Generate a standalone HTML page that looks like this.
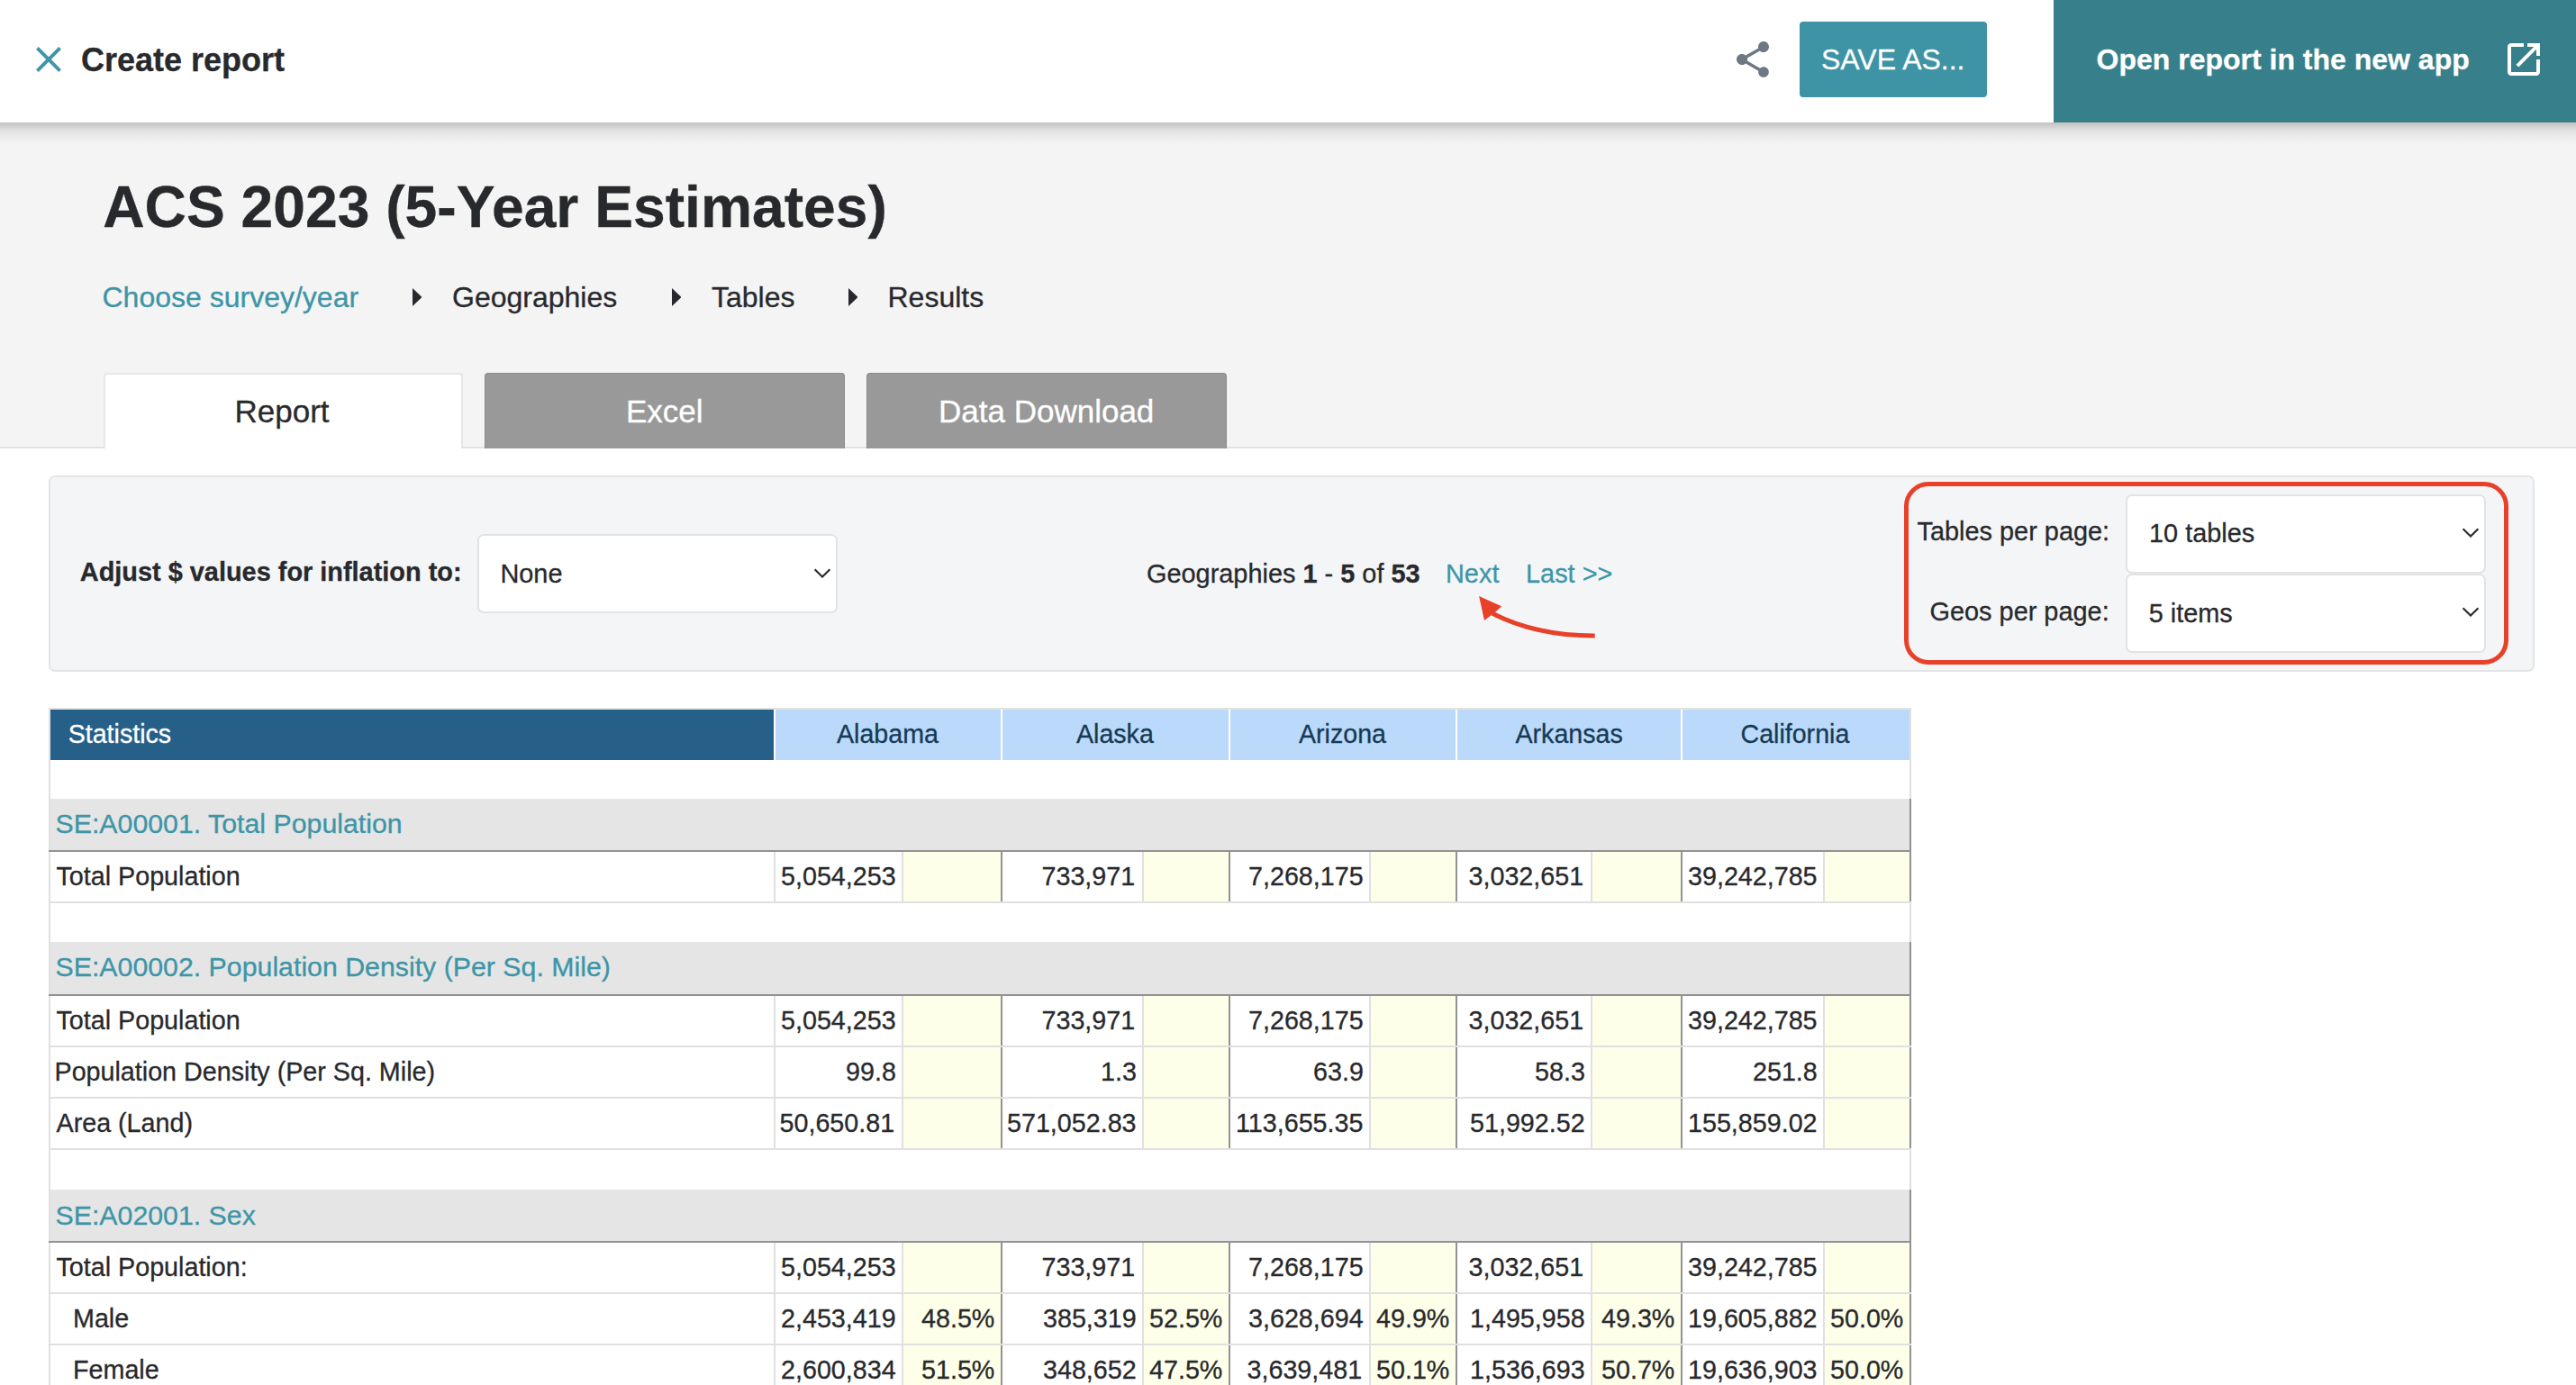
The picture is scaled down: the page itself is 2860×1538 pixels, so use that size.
<!DOCTYPE html>
<html><head><meta charset="utf-8"><title>Create report</title><style>*{margin:0;padding:0}
html,body{width:2860px;height:1538px;overflow:hidden;background:#fff}
body{position:relative;font-family:"Liberation Sans",sans-serif}
body>div{-webkit-text-stroke:0.3px currentColor}
body>div,body>svg{position:absolute}
</style></head>
<body>
<div style="left:0;top:0;width:2860px;height:497px;background:#f4f4f4"></div>
<div style="left:0;top:496px;width:2860px;height:2px;background:#e2e2e2"></div>
<div style="left:0px;top:136px;width:2860px;height:24px;background:linear-gradient(rgba(0,0,0,0.20),rgba(0,0,0,0.06) 45%,rgba(0,0,0,0));"></div>
<div style="left:0px;top:0px;width:2860px;height:136px;background:#fff;"></div>
<svg style="left:30px;top:42px" width="48" height="48" viewBox="0 0 24 24"><path fill="#3e96a8" d="M19 6.41L17.59 5 12 10.59 6.41 5 5 6.41 10.59 12 5 17.59 6.41 19 12 13.41 17.59 19 19 17.59 13.41 12z"/></svg>
<div style="left:90.00px;top:36.52px;font-size:36px;line-height:60px;font-weight:bold;color:#28292c;white-space:nowrap;">Create report</div>
<svg style="left:1922px;top:42px" width="48" height="48" viewBox="0 0 24 24"><path fill="#6e7885" d="M18 16.08c-.76 0-1.44.3-1.96.77L8.91 12.7c.05-.23.09-.46.09-.7s-.04-.47-.09-.7l7.05-4.11c.54.5 1.25.81 2.04.81 1.66 0 3-1.34 3-3s-1.34-3-3-3-3 1.34-3 3c0 .24.04.47.09.7L8.04 9.81C7.5 9.31 6.79 9 6 9c-1.66 0-3 1.34-3 3s1.34 3 3 3c.79 0 1.5-.31 2.04-.81l7.12 4.16c-.05.21-.08.43-.08.65 0 1.61 1.31 2.92 2.92 2.92 1.61 0 2.92-1.31 2.92-2.92s-1.31-2.92-2.92-2.92z"/></svg>
<div style="left:1998px;top:24px;width:208px;height:84px;background:#3e93a5;border-radius:4px;"></div>
<div style="left:2022.00px;top:35.91px;font-size:32px;line-height:60px;color:#fff;white-space:nowrap;">SAVE AS...</div>
<div style="left:2280px;top:0px;width:580px;height:136px;background:#37808b;"></div>
<div style="left:2327.50px;top:35.91px;font-size:32px;line-height:60px;font-weight:bold;color:#fff;white-space:nowrap;">Open report in the new app</div>
<svg style="left:2778px;top:41.5px" width="48" height="48" viewBox="0 0 24 24"><path fill="#fff" d="M19 19H5V5h7V3H5c-1.11 0-2 .9-2 2v14c0 1.1.89 2 2 2h14c1.1 0 2-.9 2-2v-7h-2v7zM14 3v2h3.59l-9.83 9.83 1.41 1.41L19 6.41V10h2V3h-7z"/></svg>
<div style="left:114.25px;top:200.49px;font-size:64.2px;line-height:60px;font-weight:bold;color:#28292c;white-space:nowrap;">ACS 2023 (5-Year Estimates)</div>
<div style="left:113.50px;top:300.41px;font-size:32px;line-height:60px;color:#3d95a7;white-space:nowrap;">Choose survey/year</div>
<svg style="left:458px;top:320px" width="10.4" height="20" viewBox="0 0 10.4 20"><path d="M0 0 L10.4 10 L0 20 Z" fill="#28292c"/></svg>
<svg style="left:745.8px;top:320px" width="10.4" height="20" viewBox="0 0 10.4 20"><path d="M0 0 L10.4 10 L0 20 Z" fill="#28292c"/></svg>
<svg style="left:942px;top:320px" width="10.4" height="20" viewBox="0 0 10.4 20"><path d="M0 0 L10.4 10 L0 20 Z" fill="#28292c"/></svg>
<div style="left:502.00px;top:300.41px;font-size:32px;line-height:60px;color:#28292c;white-space:nowrap;">Geographies</div>
<div style="left:790.00px;top:300.41px;font-size:32px;line-height:60px;color:#28292c;white-space:nowrap;">Tables</div>
<div style="left:985.50px;top:300.41px;font-size:32px;line-height:60px;color:#28292c;white-space:nowrap;">Results</div>
<div style="left:115px;top:414px;width:399px;height:84px;background:#fff;border:2px solid #e6e6e6;border-bottom:none;border-radius:4px 4px 0 0;box-sizing:border-box;"></div>
<div style="left:260.50px;top:427.37px;font-size:35px;line-height:60px;color:#2a2a2a;white-space:nowrap;">Report</div>
<div style="left:538px;top:414px;width:400px;height:84px;background:#999;border:1.5px solid #8a8a8a;border-bottom:none;box-sizing:border-box;border-radius:4px 4px 0 0;"></div>
<div style="left:695.00px;top:427.37px;font-size:35px;line-height:60px;color:#fff;white-space:nowrap;">Excel</div>
<div style="left:962px;top:414px;width:400px;height:84px;background:#999;border:1.5px solid #8a8a8a;border-bottom:none;box-sizing:border-box;border-radius:4px 4px 0 0;"></div>
<div style="left:1042.00px;top:427.37px;font-size:35px;line-height:60px;color:#fff;white-space:nowrap;">Data Download</div>
<div style="left:54px;top:528px;width:2760px;height:218px;background:#f4f5f7;border:2px solid #e3e4e6;border-radius:7px;box-sizing:border-box;"></div>
<div style="left:88.80px;top:604.78px;font-size:28.9px;line-height:60px;font-weight:bold;color:#28292c;white-space:nowrap;">Adjust $ values for inflation to:</div>
<div style="left:530px;top:593px;width:400px;height:88px;background:#fff;border:2px solid #e3e3e3;border-radius:7px;box-sizing:border-box;"></div>
<div style="left:555.40px;top:607.48px;font-size:28.9px;line-height:60px;color:#28292c;white-space:nowrap;">None</div>
<svg style="left:902px;top:628.5px" width="24" height="16" viewBox="0 0 24 16"><path d="M2.6 3.2 L11 11.6 L19.4 3.2" stroke="#28292c" stroke-width="2.1" fill="none"/></svg>
<div style="left:1273.00px;top:606.98px;font-size:28.9px;line-height:60px;color:#28292c;white-space:nowrap;">Geographies <b>1</b> - <b>5</b> of <b>53</b></div>
<div style="left:1605.00px;top:606.98px;font-size:28.9px;line-height:60px;color:#3d95a7;white-space:nowrap;">Next</div>
<div style="left:1694.00px;top:606.98px;font-size:28.9px;line-height:60px;color:#3d95a7;white-space:nowrap;">Last >></div>
<svg style="left:1630px;top:650px" width="150" height="70" viewBox="0 0 150 70"><path d="M140.7 55.9 C100 56 60 48 27 31.2" stroke="#e8412a" stroke-width="5" fill="none"/><path d="M12.1 12.1 L37.1 23.3 L29.8 30.1 L25.5 33.2 L18 39.1 Z" fill="#e8412a"/></svg>
<div style="left:2114px;top:535px;width:671px;height:203px;border:5px solid #e8412a;border-radius:27px;box-sizing:border-box;"></div>
<div style="left:2360px;top:548.5px;width:400px;height:88.5px;background:#fff;border:2px solid #e3e3e3;border-radius:7px;box-sizing:border-box;"></div>
<div style="left:2386.00px;top:561.98px;font-size:28.9px;line-height:60px;color:#28292c;white-space:nowrap;">10 tables</div>
<svg style="left:2732px;top:584.25px" width="24" height="16" viewBox="0 0 24 16"><path d="M2.6 3.2 L11 11.6 L19.4 3.2" stroke="#28292c" stroke-width="2.1" fill="none"/></svg>
<div style="left:2360px;top:637px;width:400px;height:87.70000000000005px;background:#fff;border:2px solid #e3e3e3;border-radius:7px;box-sizing:border-box;"></div>
<div style="left:2385.70px;top:651.18px;font-size:28.9px;line-height:60px;color:#28292c;white-space:nowrap;">5 items</div>
<svg style="left:2732px;top:672.35px" width="24" height="16" viewBox="0 0 24 16"><path d="M2.6 3.2 L11 11.6 L19.4 3.2" stroke="#28292c" stroke-width="2.1" fill="none"/></svg>
<div style="left:2128.50px;top:560.18px;font-size:28.9px;line-height:60px;color:#28292c;white-space:nowrap;">Tables per page:</div>
<div style="left:2142.50px;top:648.98px;font-size:28.9px;line-height:60px;color:#28292c;white-space:nowrap;">Geos per page:</div>
<div style="left:54px;top:786px;width:2068px;height:2px;background:#e2e2e2;"></div>
<div style="left:56px;top:788px;width:803px;height:56px;background:#266089;"></div>
<div style="left:75.70px;top:784.58px;font-size:28.6px;line-height:60px;color:#fff;white-space:nowrap;">Statistics</div>
<div style="left:861px;top:788px;width:250px;height:56px;background:#bbdafb;"></div>
<div style="left:929.00px;top:784.58px;font-size:28.6px;line-height:60px;color:#163a55;white-space:nowrap;">Alabama</div>
<div style="left:1113px;top:788px;width:251px;height:56px;background:#bbdafb;"></div>
<div style="left:1195.00px;top:784.58px;font-size:28.6px;line-height:60px;color:#163a55;white-space:nowrap;">Alaska</div>
<div style="left:1366px;top:788px;width:250px;height:56px;background:#bbdafb;"></div>
<div style="left:1442.00px;top:784.58px;font-size:28.6px;line-height:60px;color:#163a55;white-space:nowrap;">Arizona</div>
<div style="left:1618px;top:788px;width:248px;height:56px;background:#bbdafb;"></div>
<div style="left:1682.50px;top:784.58px;font-size:28.6px;line-height:60px;color:#163a55;white-space:nowrap;">Arkansas</div>
<div style="left:1868px;top:788px;width:252px;height:56px;background:#bbdafb;"></div>
<div style="left:1932.50px;top:784.58px;font-size:28.6px;line-height:60px;color:#163a55;white-space:nowrap;">California</div>
<div style="left:54px;top:788px;width:2px;height:750px;background:#e0e0e0;"></div>
<div style="left:2120px;top:788px;width:2px;height:750px;background:#e0e0e0;"></div>
<div style="left:56px;top:887px;width:2064px;height:57.299999999999955px;background:#e5e5e5;"></div>
<div style="left:54px;top:944.3px;width:2068px;height:2.0px;background:#929292;"></div>
<div style="left:2120px;top:887px;width:2px;height:57.299999999999955px;background:#929292;"></div>
<div style="left:61.50px;top:885.49px;font-size:30.3px;line-height:60px;color:#3d95a7;white-space:nowrap;">SE:A00001. Total Population</div>
<div style="left:56px;top:946.3px;width:2064px;height:55.0px;background:#fff;"></div>
<div style="left:1003px;top:946.3px;width:108px;height:55.0px;background:#fdffe8;"></div>
<div style="left:1001px;top:946.3px;width:2px;height:55.0px;background:#e0e0e0;"></div>
<div style="left:1111px;top:946.3px;width:2px;height:55.0px;background:#929292;"></div>
<div style="left:867.00px;top:942.95px;font-size:28.7px;line-height:60px;color:#28292c;white-space:nowrap;">5,054,253</div>
<div style="left:1270px;top:946.3px;width:94px;height:55.0px;background:#fdffe8;"></div>
<div style="left:1268px;top:946.3px;width:2px;height:55.0px;background:#e0e0e0;"></div>
<div style="left:1364px;top:946.3px;width:2px;height:55.0px;background:#929292;"></div>
<div style="left:1156.50px;top:942.95px;font-size:28.7px;line-height:60px;color:#28292c;white-space:nowrap;">733,971</div>
<div style="left:1522px;top:946.3px;width:94px;height:55.0px;background:#fdffe8;"></div>
<div style="left:1520px;top:946.3px;width:2px;height:55.0px;background:#e0e0e0;"></div>
<div style="left:1616px;top:946.3px;width:2px;height:55.0px;background:#929292;"></div>
<div style="left:1386.00px;top:942.95px;font-size:28.7px;line-height:60px;color:#28292c;white-space:nowrap;">7,268,175</div>
<div style="left:1768px;top:946.3px;width:98px;height:55.0px;background:#fdffe8;"></div>
<div style="left:1766px;top:946.3px;width:2px;height:55.0px;background:#e0e0e0;"></div>
<div style="left:1866px;top:946.3px;width:2px;height:55.0px;background:#929292;"></div>
<div style="left:1630.50px;top:942.95px;font-size:28.7px;line-height:60px;color:#28292c;white-space:nowrap;">3,032,651</div>
<div style="left:2026px;top:946.3px;width:94px;height:55.0px;background:#fdffe8;"></div>
<div style="left:2024px;top:946.3px;width:2px;height:55.0px;background:#e0e0e0;"></div>
<div style="left:2120px;top:946.3px;width:2px;height:55.0px;background:#929292;"></div>
<div style="left:1874.00px;top:942.95px;font-size:28.7px;line-height:60px;color:#28292c;white-space:nowrap;">39,242,785</div>
<div style="left:859px;top:946.3px;width:2px;height:55.0px;background:#e0e0e0;"></div>
<div style="left:62.50px;top:942.95px;font-size:28.7px;line-height:60px;color:#28292c;white-space:nowrap;">Total Population</div>
<div style="left:56px;top:1001.3px;width:2066px;height:2.0px;background:#e0e0e0;"></div>
<div style="left:56px;top:1046px;width:2064px;height:58.200000000000045px;background:#e5e5e5;"></div>
<div style="left:54px;top:1104.2px;width:2068px;height:2.0px;background:#929292;"></div>
<div style="left:2120px;top:1046px;width:2px;height:58.200000000000045px;background:#929292;"></div>
<div style="left:61.50px;top:1044.49px;font-size:30.3px;line-height:60px;color:#3d95a7;white-space:nowrap;">SE:A00002. Population Density (Per Sq. Mile)</div>
<div style="left:56px;top:1106.2px;width:2064px;height:55.0px;background:#fff;"></div>
<div style="left:1003px;top:1106.2px;width:108px;height:55.0px;background:#fdffe8;"></div>
<div style="left:1001px;top:1106.2px;width:2px;height:55.0px;background:#e0e0e0;"></div>
<div style="left:1111px;top:1106.2px;width:2px;height:55.0px;background:#929292;"></div>
<div style="left:867.00px;top:1102.85px;font-size:28.7px;line-height:60px;color:#28292c;white-space:nowrap;">5,054,253</div>
<div style="left:1270px;top:1106.2px;width:94px;height:55.0px;background:#fdffe8;"></div>
<div style="left:1268px;top:1106.2px;width:2px;height:55.0px;background:#e0e0e0;"></div>
<div style="left:1364px;top:1106.2px;width:2px;height:55.0px;background:#929292;"></div>
<div style="left:1156.50px;top:1102.85px;font-size:28.7px;line-height:60px;color:#28292c;white-space:nowrap;">733,971</div>
<div style="left:1522px;top:1106.2px;width:94px;height:55.0px;background:#fdffe8;"></div>
<div style="left:1520px;top:1106.2px;width:2px;height:55.0px;background:#e0e0e0;"></div>
<div style="left:1616px;top:1106.2px;width:2px;height:55.0px;background:#929292;"></div>
<div style="left:1386.00px;top:1102.85px;font-size:28.7px;line-height:60px;color:#28292c;white-space:nowrap;">7,268,175</div>
<div style="left:1768px;top:1106.2px;width:98px;height:55.0px;background:#fdffe8;"></div>
<div style="left:1766px;top:1106.2px;width:2px;height:55.0px;background:#e0e0e0;"></div>
<div style="left:1866px;top:1106.2px;width:2px;height:55.0px;background:#929292;"></div>
<div style="left:1630.50px;top:1102.85px;font-size:28.7px;line-height:60px;color:#28292c;white-space:nowrap;">3,032,651</div>
<div style="left:2026px;top:1106.2px;width:94px;height:55.0px;background:#fdffe8;"></div>
<div style="left:2024px;top:1106.2px;width:2px;height:55.0px;background:#e0e0e0;"></div>
<div style="left:2120px;top:1106.2px;width:2px;height:55.0px;background:#929292;"></div>
<div style="left:1874.00px;top:1102.85px;font-size:28.7px;line-height:60px;color:#28292c;white-space:nowrap;">39,242,785</div>
<div style="left:859px;top:1106.2px;width:2px;height:55.0px;background:#e0e0e0;"></div>
<div style="left:62.50px;top:1102.85px;font-size:28.7px;line-height:60px;color:#28292c;white-space:nowrap;">Total Population</div>
<div style="left:56px;top:1161.2px;width:2066px;height:2.0px;background:#e0e0e0;"></div>
<div style="left:56px;top:1163.2px;width:2064px;height:55.0px;background:#fff;"></div>
<div style="left:1003px;top:1163.2px;width:108px;height:55.0px;background:#fdffe8;"></div>
<div style="left:1001px;top:1163.2px;width:2px;height:55.0px;background:#e0e0e0;"></div>
<div style="left:1111px;top:1163.2px;width:2px;height:55.0px;background:#929292;"></div>
<div style="left:939.00px;top:1159.85px;font-size:28.7px;line-height:60px;color:#28292c;white-space:nowrap;">99.8</div>
<div style="left:1270px;top:1163.2px;width:94px;height:55.0px;background:#fdffe8;"></div>
<div style="left:1268px;top:1163.2px;width:2px;height:55.0px;background:#e0e0e0;"></div>
<div style="left:1364px;top:1163.2px;width:2px;height:55.0px;background:#929292;"></div>
<div style="left:1222.00px;top:1159.85px;font-size:28.7px;line-height:60px;color:#28292c;white-space:nowrap;">1.3</div>
<div style="left:1522px;top:1163.2px;width:94px;height:55.0px;background:#fdffe8;"></div>
<div style="left:1520px;top:1163.2px;width:2px;height:55.0px;background:#e0e0e0;"></div>
<div style="left:1616px;top:1163.2px;width:2px;height:55.0px;background:#929292;"></div>
<div style="left:1458.00px;top:1159.85px;font-size:28.7px;line-height:60px;color:#28292c;white-space:nowrap;">63.9</div>
<div style="left:1768px;top:1163.2px;width:98px;height:55.0px;background:#fdffe8;"></div>
<div style="left:1766px;top:1163.2px;width:2px;height:55.0px;background:#e0e0e0;"></div>
<div style="left:1866px;top:1163.2px;width:2px;height:55.0px;background:#929292;"></div>
<div style="left:1704.00px;top:1159.85px;font-size:28.7px;line-height:60px;color:#28292c;white-space:nowrap;">58.3</div>
<div style="left:2026px;top:1163.2px;width:94px;height:55.0px;background:#fdffe8;"></div>
<div style="left:2024px;top:1163.2px;width:2px;height:55.0px;background:#e0e0e0;"></div>
<div style="left:2120px;top:1163.2px;width:2px;height:55.0px;background:#929292;"></div>
<div style="left:1946.00px;top:1159.85px;font-size:28.7px;line-height:60px;color:#28292c;white-space:nowrap;">251.8</div>
<div style="left:859px;top:1163.2px;width:2px;height:55.0px;background:#e0e0e0;"></div>
<div style="left:60.50px;top:1159.85px;font-size:28.7px;line-height:60px;color:#28292c;white-space:nowrap;">Population Density (Per Sq. Mile)</div>
<div style="left:56px;top:1218.2px;width:2066px;height:2.0px;background:#e0e0e0;"></div>
<div style="left:56px;top:1220.2px;width:2064px;height:55.0px;background:#fff;"></div>
<div style="left:1003px;top:1220.2px;width:108px;height:55.0px;background:#fdffe8;"></div>
<div style="left:1001px;top:1220.2px;width:2px;height:55.0px;background:#e0e0e0;"></div>
<div style="left:1111px;top:1220.2px;width:2px;height:55.0px;background:#929292;"></div>
<div style="left:865.50px;top:1216.85px;font-size:28.7px;line-height:60px;color:#28292c;white-space:nowrap;">50,650.81</div>
<div style="left:1270px;top:1220.2px;width:94px;height:55.0px;background:#fdffe8;"></div>
<div style="left:1268px;top:1220.2px;width:2px;height:55.0px;background:#e0e0e0;"></div>
<div style="left:1364px;top:1220.2px;width:2px;height:55.0px;background:#929292;"></div>
<div style="left:1118.00px;top:1216.85px;font-size:28.7px;line-height:60px;color:#28292c;white-space:nowrap;">571,052.83</div>
<div style="left:1522px;top:1220.2px;width:94px;height:55.0px;background:#fdffe8;"></div>
<div style="left:1520px;top:1220.2px;width:2px;height:55.0px;background:#e0e0e0;"></div>
<div style="left:1616px;top:1220.2px;width:2px;height:55.0px;background:#929292;"></div>
<div style="left:1372.00px;top:1216.85px;font-size:28.7px;line-height:60px;color:#28292c;white-space:nowrap;">113,655.35</div>
<div style="left:1768px;top:1220.2px;width:98px;height:55.0px;background:#fdffe8;"></div>
<div style="left:1766px;top:1220.2px;width:2px;height:55.0px;background:#e0e0e0;"></div>
<div style="left:1866px;top:1220.2px;width:2px;height:55.0px;background:#929292;"></div>
<div style="left:1632.00px;top:1216.85px;font-size:28.7px;line-height:60px;color:#28292c;white-space:nowrap;">51,992.52</div>
<div style="left:2026px;top:1220.2px;width:94px;height:55.0px;background:#fdffe8;"></div>
<div style="left:2024px;top:1220.2px;width:2px;height:55.0px;background:#e0e0e0;"></div>
<div style="left:2120px;top:1220.2px;width:2px;height:55.0px;background:#929292;"></div>
<div style="left:1874.00px;top:1216.85px;font-size:28.7px;line-height:60px;color:#28292c;white-space:nowrap;">155,859.02</div>
<div style="left:859px;top:1220.2px;width:2px;height:55.0px;background:#e0e0e0;"></div>
<div style="left:62.50px;top:1216.85px;font-size:28.7px;line-height:60px;color:#28292c;white-space:nowrap;">Area (Land)</div>
<div style="left:56px;top:1275.2px;width:2066px;height:2.0px;background:#e0e0e0;"></div>
<div style="left:56px;top:1321.2px;width:2064px;height:57.09999999999991px;background:#e5e5e5;"></div>
<div style="left:54px;top:1378.3px;width:2068px;height:2.0px;background:#929292;"></div>
<div style="left:2120px;top:1321.2px;width:2px;height:57.09999999999991px;background:#929292;"></div>
<div style="left:61.50px;top:1319.69px;font-size:30.3px;line-height:60px;color:#3d95a7;white-space:nowrap;">SE:A02001. Sex</div>
<div style="left:56px;top:1380.3px;width:2064px;height:55.0px;background:#fff;"></div>
<div style="left:1003px;top:1380.3px;width:108px;height:55.0px;background:#fdffe8;"></div>
<div style="left:1001px;top:1380.3px;width:2px;height:55.0px;background:#e0e0e0;"></div>
<div style="left:1111px;top:1380.3px;width:2px;height:55.0px;background:#929292;"></div>
<div style="left:867.00px;top:1376.95px;font-size:28.7px;line-height:60px;color:#28292c;white-space:nowrap;">5,054,253</div>
<div style="left:1270px;top:1380.3px;width:94px;height:55.0px;background:#fdffe8;"></div>
<div style="left:1268px;top:1380.3px;width:2px;height:55.0px;background:#e0e0e0;"></div>
<div style="left:1364px;top:1380.3px;width:2px;height:55.0px;background:#929292;"></div>
<div style="left:1156.50px;top:1376.95px;font-size:28.7px;line-height:60px;color:#28292c;white-space:nowrap;">733,971</div>
<div style="left:1522px;top:1380.3px;width:94px;height:55.0px;background:#fdffe8;"></div>
<div style="left:1520px;top:1380.3px;width:2px;height:55.0px;background:#e0e0e0;"></div>
<div style="left:1616px;top:1380.3px;width:2px;height:55.0px;background:#929292;"></div>
<div style="left:1386.00px;top:1376.95px;font-size:28.7px;line-height:60px;color:#28292c;white-space:nowrap;">7,268,175</div>
<div style="left:1768px;top:1380.3px;width:98px;height:55.0px;background:#fdffe8;"></div>
<div style="left:1766px;top:1380.3px;width:2px;height:55.0px;background:#e0e0e0;"></div>
<div style="left:1866px;top:1380.3px;width:2px;height:55.0px;background:#929292;"></div>
<div style="left:1630.50px;top:1376.95px;font-size:28.7px;line-height:60px;color:#28292c;white-space:nowrap;">3,032,651</div>
<div style="left:2026px;top:1380.3px;width:94px;height:55.0px;background:#fdffe8;"></div>
<div style="left:2024px;top:1380.3px;width:2px;height:55.0px;background:#e0e0e0;"></div>
<div style="left:2120px;top:1380.3px;width:2px;height:55.0px;background:#929292;"></div>
<div style="left:1874.00px;top:1376.95px;font-size:28.7px;line-height:60px;color:#28292c;white-space:nowrap;">39,242,785</div>
<div style="left:859px;top:1380.3px;width:2px;height:55.0px;background:#e0e0e0;"></div>
<div style="left:62.50px;top:1376.95px;font-size:28.7px;line-height:60px;color:#28292c;white-space:nowrap;">Total Population:</div>
<div style="left:56px;top:1435.3px;width:2066px;height:2.0px;background:#e0e0e0;"></div>
<div style="left:56px;top:1437.3px;width:2064px;height:55.0px;background:#fff;"></div>
<div style="left:1003px;top:1437.3px;width:108px;height:55.0px;background:#fdffe8;"></div>
<div style="left:1001px;top:1437.3px;width:2px;height:55.0px;background:#e0e0e0;"></div>
<div style="left:1111px;top:1437.3px;width:2px;height:55.0px;background:#929292;"></div>
<div style="left:867.00px;top:1433.95px;font-size:28.7px;line-height:60px;color:#28292c;white-space:nowrap;">2,453,419</div>
<div style="left:1023.00px;top:1433.95px;font-size:28.7px;line-height:60px;color:#28292c;white-space:nowrap;">48.5%</div>
<div style="left:1270px;top:1437.3px;width:94px;height:55.0px;background:#fdffe8;"></div>
<div style="left:1268px;top:1437.3px;width:2px;height:55.0px;background:#e0e0e0;"></div>
<div style="left:1364px;top:1437.3px;width:2px;height:55.0px;background:#929292;"></div>
<div style="left:1158.00px;top:1433.95px;font-size:28.7px;line-height:60px;color:#28292c;white-space:nowrap;">385,319</div>
<div style="left:1276.00px;top:1433.95px;font-size:28.7px;line-height:60px;color:#28292c;white-space:nowrap;">52.5%</div>
<div style="left:1522px;top:1437.3px;width:94px;height:55.0px;background:#fdffe8;"></div>
<div style="left:1520px;top:1437.3px;width:2px;height:55.0px;background:#e0e0e0;"></div>
<div style="left:1616px;top:1437.3px;width:2px;height:55.0px;background:#929292;"></div>
<div style="left:1386.00px;top:1433.95px;font-size:28.7px;line-height:60px;color:#28292c;white-space:nowrap;">3,628,694</div>
<div style="left:1528.00px;top:1433.95px;font-size:28.7px;line-height:60px;color:#28292c;white-space:nowrap;">49.9%</div>
<div style="left:1768px;top:1437.3px;width:98px;height:55.0px;background:#fdffe8;"></div>
<div style="left:1766px;top:1437.3px;width:2px;height:55.0px;background:#e0e0e0;"></div>
<div style="left:1866px;top:1437.3px;width:2px;height:55.0px;background:#929292;"></div>
<div style="left:1632.00px;top:1433.95px;font-size:28.7px;line-height:60px;color:#28292c;white-space:nowrap;">1,495,958</div>
<div style="left:1778.00px;top:1433.95px;font-size:28.7px;line-height:60px;color:#28292c;white-space:nowrap;">49.3%</div>
<div style="left:2026px;top:1437.3px;width:94px;height:55.0px;background:#fdffe8;"></div>
<div style="left:2024px;top:1437.3px;width:2px;height:55.0px;background:#e0e0e0;"></div>
<div style="left:2120px;top:1437.3px;width:2px;height:55.0px;background:#929292;"></div>
<div style="left:1874.00px;top:1433.95px;font-size:28.7px;line-height:60px;color:#28292c;white-space:nowrap;">19,605,882</div>
<div style="left:2032.00px;top:1433.95px;font-size:28.7px;line-height:60px;color:#28292c;white-space:nowrap;">50.0%</div>
<div style="left:859px;top:1437.3px;width:2px;height:55.0px;background:#e0e0e0;"></div>
<div style="left:81.00px;top:1433.95px;font-size:28.7px;line-height:60px;color:#28292c;white-space:nowrap;">Male</div>
<div style="left:56px;top:1492.3px;width:2066px;height:2.0px;background:#e0e0e0;"></div>
<div style="left:56px;top:1494.3px;width:2064px;height:55.0px;background:#fff;"></div>
<div style="left:1003px;top:1494.3px;width:108px;height:55.0px;background:#fdffe8;"></div>
<div style="left:1001px;top:1494.3px;width:2px;height:55.0px;background:#e0e0e0;"></div>
<div style="left:1111px;top:1494.3px;width:2px;height:55.0px;background:#929292;"></div>
<div style="left:867.00px;top:1490.95px;font-size:28.7px;line-height:60px;color:#28292c;white-space:nowrap;">2,600,834</div>
<div style="left:1023.00px;top:1490.95px;font-size:28.7px;line-height:60px;color:#28292c;white-space:nowrap;">51.5%</div>
<div style="left:1270px;top:1494.3px;width:94px;height:55.0px;background:#fdffe8;"></div>
<div style="left:1268px;top:1494.3px;width:2px;height:55.0px;background:#e0e0e0;"></div>
<div style="left:1364px;top:1494.3px;width:2px;height:55.0px;background:#929292;"></div>
<div style="left:1158.00px;top:1490.95px;font-size:28.7px;line-height:60px;color:#28292c;white-space:nowrap;">348,652</div>
<div style="left:1276.00px;top:1490.95px;font-size:28.7px;line-height:60px;color:#28292c;white-space:nowrap;">47.5%</div>
<div style="left:1522px;top:1494.3px;width:94px;height:55.0px;background:#fdffe8;"></div>
<div style="left:1520px;top:1494.3px;width:2px;height:55.0px;background:#e0e0e0;"></div>
<div style="left:1616px;top:1494.3px;width:2px;height:55.0px;background:#929292;"></div>
<div style="left:1384.50px;top:1490.95px;font-size:28.7px;line-height:60px;color:#28292c;white-space:nowrap;">3,639,481</div>
<div style="left:1528.00px;top:1490.95px;font-size:28.7px;line-height:60px;color:#28292c;white-space:nowrap;">50.1%</div>
<div style="left:1768px;top:1494.3px;width:98px;height:55.0px;background:#fdffe8;"></div>
<div style="left:1766px;top:1494.3px;width:2px;height:55.0px;background:#e0e0e0;"></div>
<div style="left:1866px;top:1494.3px;width:2px;height:55.0px;background:#929292;"></div>
<div style="left:1632.00px;top:1490.95px;font-size:28.7px;line-height:60px;color:#28292c;white-space:nowrap;">1,536,693</div>
<div style="left:1778.00px;top:1490.95px;font-size:28.7px;line-height:60px;color:#28292c;white-space:nowrap;">50.7%</div>
<div style="left:2026px;top:1494.3px;width:94px;height:55.0px;background:#fdffe8;"></div>
<div style="left:2024px;top:1494.3px;width:2px;height:55.0px;background:#e0e0e0;"></div>
<div style="left:2120px;top:1494.3px;width:2px;height:55.0px;background:#929292;"></div>
<div style="left:1874.00px;top:1490.95px;font-size:28.7px;line-height:60px;color:#28292c;white-space:nowrap;">19,636,903</div>
<div style="left:2032.00px;top:1490.95px;font-size:28.7px;line-height:60px;color:#28292c;white-space:nowrap;">50.0%</div>
<div style="left:859px;top:1494.3px;width:2px;height:55.0px;background:#e0e0e0;"></div>
<div style="left:81.00px;top:1490.95px;font-size:28.7px;line-height:60px;color:#28292c;white-space:nowrap;">Female</div>
<div style="left:56px;top:1549.3px;width:2066px;height:2.0px;background:#e0e0e0;"></div>
</body></html>
